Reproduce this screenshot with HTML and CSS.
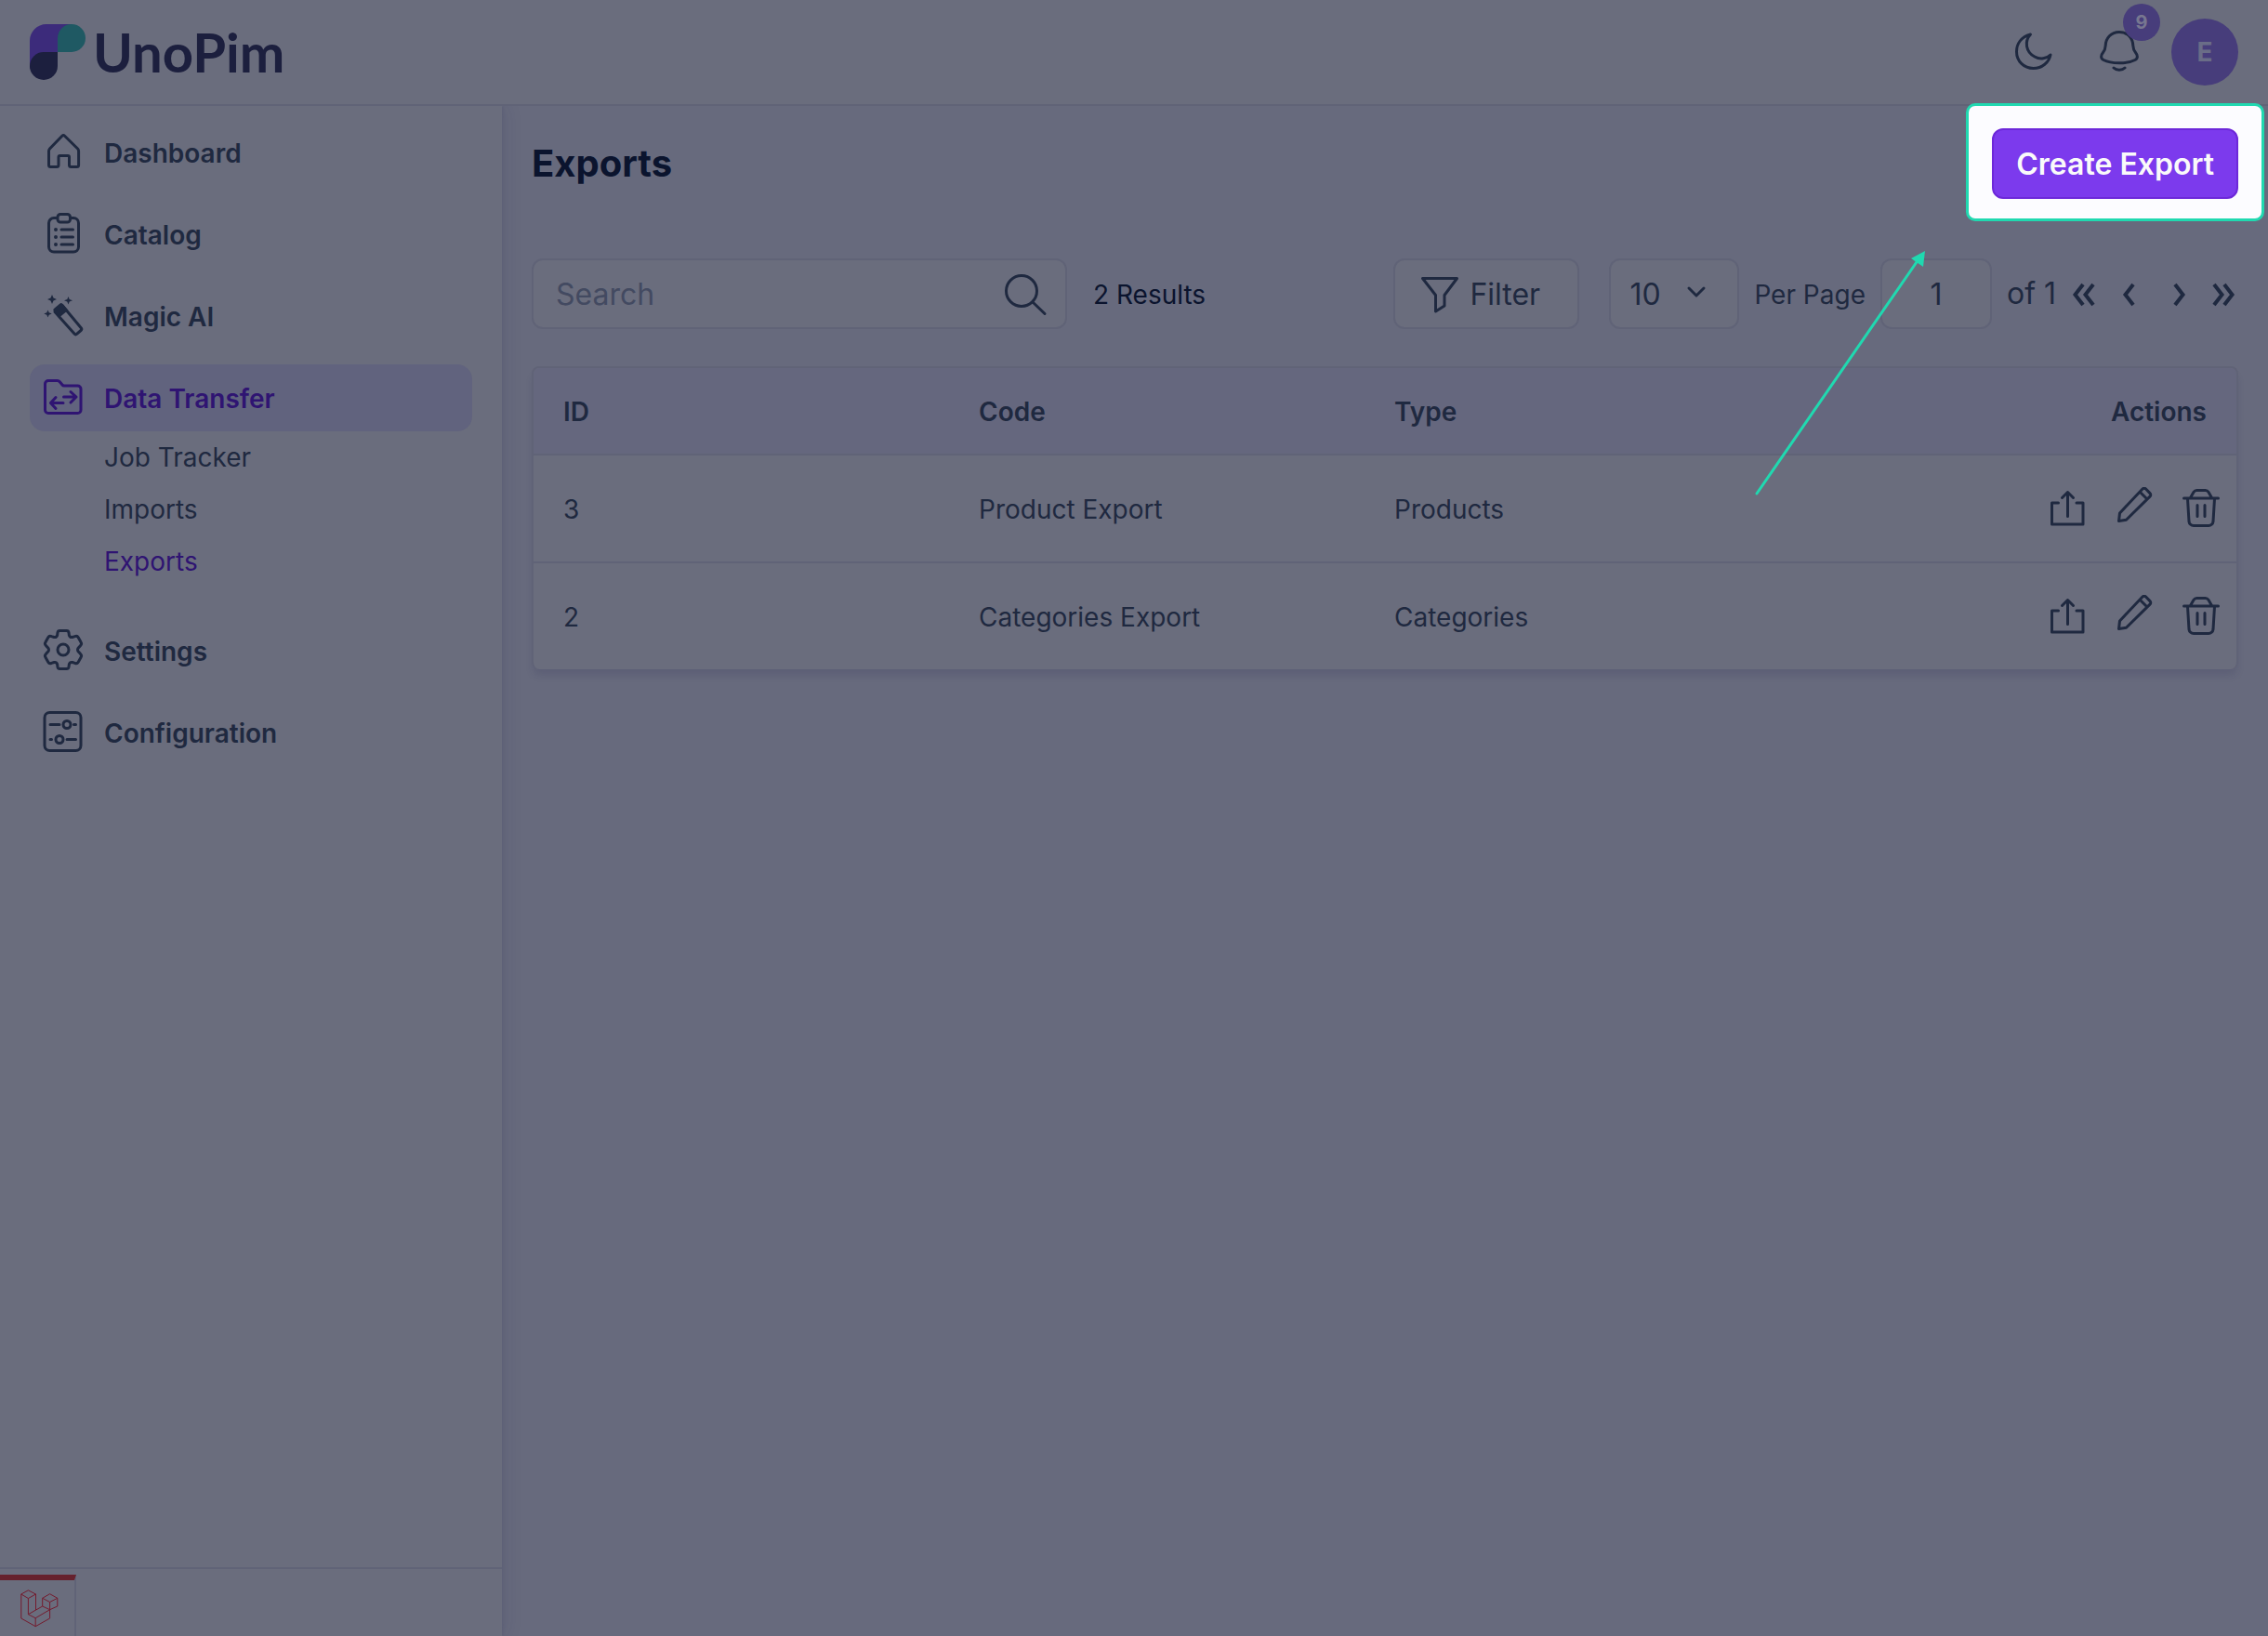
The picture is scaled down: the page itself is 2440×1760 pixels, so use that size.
FILE: index.html
```html
<!DOCTYPE html>
<html lang="en">
<head>
  <meta charset="UTF-8">
  <meta name="viewport" content="width=device-width, initial-scale=1.0">
  <title>Exports</title>
  <link rel="stylesheet" href="styles.css">
</head>
<body>
  <!-- Shared icons -->
  <svg class="sprite" aria-hidden="true">
    <symbol id="icon-export" viewBox="0 0 48 48">
      <path d="M14.500 17H7.500V40H41V17H34M24.500 31.500V5.500M18.500 11.500l6-6 6 6"/>
    </symbol>
    <symbol id="icon-edit" viewBox="0 0 48 48">
      <path d="M7.500 36.500L8.500 28 33 2a2.500 2.500 0 0 1 3.600 0l4.400 4.600a2.500 2.500 0 0 1 0 3.600L15.500 35.200ZM30.500 5.500l7.500 7.500"/>
    </symbol>
    <symbol id="icon-delete" viewBox="0 0 48 48">
      <path d="M5.500 12H42.500M12.500 11.500l3.600-6.200a4 4 0 0 1 3.300-1.800h9.200a4 4 0 0 1 3.300 1.800L35.500 11.500M9.500 12.500l1.500 24.500a5 5 0 0 0 5 4.500h16a5 5 0 0 0 5-4.500L38.500 12.500M20 19.500V31.500M28 19.500V31.500"/>
    </symbol>
  </svg>

  <header class="header">
    <a href="#" class="logo" aria-label="UnoPim">
      <svg class="logo-mark" viewBox="0 0 60 60">
        <path fill="#3c2b7b" d="M0 48V18C0 8 8 0 18 0H45V30H20Z"/>
        <path fill="#1f5963" d="M30 30V15a15 15 0 0 1 30 0a15 15 0 0 1-15 15Z"/>
        <path fill="#1c1f3e" d="M30 30V45a15 15 0 0 1-30 0a15 15 0 0 1 15-15Z"/>
      </svg>
      <span class="logo-text">UnoPim</span>
    </a>
    <div class="header-right">
      <div class="header-icons">
        <button type="button" class="icon-button" aria-label="Dark mode">
          <svg class="icon" viewBox="0 0 48 48"><path d="M20.500 5C10 8 5.500 15.500 5.500 23.500C5.500 34 13.500 41.500 23.500 41.500C33 41.500 40.500 35 42 27C38 31 31 32.500 25 29C15.500 24 13.500 12.500 20.500 5Z"/></svg>
        </button>
        <button type="button" class="icon-button bell" aria-label="Notifications">
          <svg class="icon" viewBox="0 0 48 48"><path d="M24 2.500C15 2.500 9.500 9 9.200 17C9 21 8.500 22 6.500 24.500C4 27.500 3.800 31 7 32.500C11 34.600 17 35.800 24 35.800S37 34.600 41 32.500C44.200 31 44 27.500 41.500 24.500C39.500 22 39 21 38.800 17C38.500 9 33 2.500 24 2.500ZM18 41C21 44 27 44 30 41"/></svg>
          <span class="badge">9</span>
        </button>
      </div>
      <button type="button" class="avatar">E</button>
    </div>
  </header>

  <div class="layout">
    <aside class="sidebar">
      <nav class="menu">
        <a href="#" class="menu-item">
          <svg class="icon" viewBox="0 0 48 48"><path d="M22.800 5.200a2 2 0 0 1 2.800 0L39.600 19a4 4 0 0 1 1 2.600V36.500a2 2 0 0 1-2 2H32.500a2 2 0 0 1-2-2V28a1.500 1.500 0 0 0-1.500-1.500H20.500a1.500 1.500 0 0 0-1.500 1.500V36.500a2 2 0 0 1-2 2H10.500a2 2 0 0 1-2-2V21.600a4 4 0 0 1 1-2.600Z"/></svg>
          Dashboard
        </a>
        <a href="#" class="menu-item">
          <svg class="icon" viewBox="0 0 48 48"><path d="M18 5.500H14a5.500 5.500 0 0 0-5.500 5.500V36.500a5.500 5.500 0 0 0 5.500 5.500H35a5.500 5.500 0 0 0 5.500-5.500V11a5.500 5.500 0 0 0-5.500-5.500H31.500M21 1.500h7.500a3 3 0 0 1 3 3v2.500a3 3 0 0 1-3 3H21a3 3 0 0 1-3-3V4.500a3 3 0 0 1 3-3ZM22 18H34.500M22 26H34.500M22 34H34.500"/><path class="dots" d="M16 18h0M16 26h0M16 34h0"/></svg>
          Catalog
        </a>
        <a href="#" class="menu-item">
          <svg class="icon" viewBox="0 0 48 48"><path d="M15 18.500L36 42a2 2 0 0 0 2.800.2l4.200-3.700a2 2 0 0 0 .2-2.800L23 11.500"/><path class="solid" d="M14 15l6.500-5.500a2 2 0 0 1 2.800.3l6 7-8.500 7-7-6a2 2 0 0 1 .2-2.800ZM12 0l1.500 3.500L17 5l-3.500 1.500L12 10l-1.500-3.500L7 5l3.500-1.500ZM29.500 2l1.200 3L34 6.200l-3.300 1.200-1.200 3-1.200-3L25 6.200 28.300 5ZM7.500 16.500l1.200 2.800 3 1.200-3 1.200-1.200 2.800-1.200-2.800-3-1.200 3-1.200Z"/></svg>
          Magic AI
        </a>
        <div class="menu-group">
          <a href="#" class="menu-item active">
            <svg class="icon" viewBox="0 0 48 48"><path d="M8 4.500H17.500a4 4 0 0 1 3 1.500L23 9a2.500 2.500 0 0 0 2 1H39.500a3.500 3.500 0 0 1 3.500 3.500V36a3.500 3.500 0 0 1-3.500 3.500H8a3.500 3.500 0 0 1-3.500-3.500V8a3.500 3.500 0 0 1 3.500-3.500ZM24.500 22H38M32 16.500l6 5.500-6 6M24 28.500H10.500M16 22.500l-5.500 6 5.500 6"/></svg>
            Data Transfer
          </a>
          <div class="submenu">
            <a href="#">Job Tracker</a>
            <a href="#">Imports</a>
            <a href="#" class="current">Exports</a>
          </div>
        </div>
        <a href="#" class="menu-item">
          <svg class="icon" viewBox="0 1 48 48"><path d="M20.500 2.500H27.500A2.500 2.500 0 0 1 30 4.500L30.400 7.500A3 3 0 0 0 33.800 9.500L36.600 8.600A2.800 2.800 0 0 1 40.200 9.800L43 14.800A2.800 2.800 0 0 1 42.600 18.400L40.600 20.700A3 3 0 0 0 40.600 25.300L42.600 27.600A2.800 2.800 0 0 1 43 31.200L40.200 36.200A2.800 2.800 0 0 1 36.600 37.400L33.800 36.500A3 3 0 0 0 30.400 38.500L30 41.500A2.500 2.500 0 0 1 27.500 43.500H20.500A2.500 2.500 0 0 1 18 41.500L17.600 38.500A3 3 0 0 0 14.200 36.500L11.400 37.400A2.800 2.800 0 0 1 7.800 36.200L5 31.200A2.800 2.800 0 0 1 5.400 27.600L7.400 25.300A3 3 0 0 0 7.400 20.700L5.400 18.400A2.800 2.800 0 0 1 5 14.800L7.800 9.800A2.800 2.800 0 0 1 11.400 8.600L14.200 9.500A3 3 0 0 0 17.600 7.500L18 4.500A2.500 2.500 0 0 1 20.500 2.500Z"/><circle cx="24" cy="23" r="6"/></svg>
          Settings
        </a>
        <a href="#" class="menu-item">
          <svg class="icon" viewBox="0 1 48 48"><rect x="4" y="2.500" width="39" height="41" rx="5.500"/><path d="M10 15.500H20M35.500 15.500H37.500M10 31.500H11.500M28 31.500H37.500"/><circle cx="28" cy="15.500" r="4"/><circle cx="20" cy="31.500" r="4"/></svg>
          Configuration
        </a>
      </nav>
      <div class="sidebar-footer"></div>
    </aside>

    <main class="content">
      <div class="page-head">
        <h1>Exports</h1>
        <div class="tour-target">
          <span class="spotlight"></span>
          <button type="button" class="primary-button">Create Export</button>
          <svg class="tour-arrow" viewBox="0 0 190 270">
            <path class="line" d="M4 265L178 13"/>
            <path class="head" d="M185 4L170 12L183 21Z"/>
          </svg>
        </div>
      </div>

      <div class="toolbar">
        <div class="search">
          <input type="text" placeholder="Search" aria-label="Search">
          <svg class="icon" viewBox="0 0 48 48"><circle cx="19" cy="21" r="16.500"/><path d="M31 33L44 45.500"/></svg>
        </div>
        <p class="results">2 Results</p>

        <button type="button" class="filter">
          <svg class="icon" viewBox="0 0 48 48"><path d="M5.500 7.500H42.500L29 25.500V37L19.500 43V25.500Z"/></svg>
          Filter
        </button>
        <div class="select">
          <select id="per-page">
            <option>10</option>
            <option>20</option>
            <option>50</option>
          </select>
          <svg class="icon" viewBox="0 0 24 24"><path d="M4 8l8 8 8-8"/></svg>
        </div>
        <label for="per-page" class="per-page">Per Page</label>
        <input type="text" class="page-input" value="1" aria-label="Page">
        <span class="total">of 1</span>
        <div class="pager">
          <button type="button" aria-label="First page"><svg class="icon" viewBox="0 0 32 32"><path d="M15 6L6.500 17L15 28M26 6L17.500 17L26 28"/></svg></button>
          <button type="button" aria-label="Previous page"><svg class="icon" viewBox="0 0 32 32"><path d="M21 6L12.500 17L21 28"/></svg></button>
          <button type="button" aria-label="Next page" class="next"><svg class="icon" viewBox="0 0 32 32"><path d="M12 6L20.500 17L12 28"/></svg></button>
          <button type="button" aria-label="Last page"><svg class="icon" viewBox="0 0 32 32"><path d="M6 6L14.500 17L6 28M17 6L25.500 17L17 28"/></svg></button>
        </div>
      </div>

      <table class="grid">
        <thead>
          <tr>
            <th>ID</th>
            <th>Code</th>
            <th>Type</th>
            <th class="right">Actions</th>
          </tr>
        </thead>
        <tbody>
          <tr>
            <td>3</td>
            <td>Product Export</td>
            <td>Products</td>
            <td class="actions">
              <button type="button" class="icon-button" aria-label="Export"><svg class="icon"><use href="#icon-export"/></svg></button>
              <button type="button" class="icon-button" aria-label="Edit"><svg class="icon"><use href="#icon-edit"/></svg></button>
              <button type="button" class="icon-button" aria-label="Delete"><svg class="icon"><use href="#icon-delete"/></svg></button>
            </td>
          </tr>
          <tr>
            <td>2</td>
            <td>Categories Export</td>
            <td>Categories</td>
            <td class="actions">
              <button type="button" class="icon-button" aria-label="Export"><svg class="icon"><use href="#icon-export"/></svg></button>
              <button type="button" class="icon-button" aria-label="Edit"><svg class="icon"><use href="#icon-edit"/></svg></button>
              <button type="button" class="icon-button" aria-label="Delete"><svg class="icon"><use href="#icon-delete"/></svg></button>
            </td>
          </tr>
        </tbody>
      </table>
    </main>
  </div>

  <!-- Laravel debug bar, collapsed -->
  <a href="#" class="debugbar" aria-label="Debug bar">
    <svg viewBox="0 0 41 41"><path d="M.8 5L8.400.8L16.500 5V22M.8 5V31L16.200 39.700L31.600 31V21.700M.8 5L8.400 9.500L16.500 5M8.400 9.500V26.700L16.200 30.700V39.700M8.400 26.700L23.700 18V9.300L31.600 4.700L39.800 9.300V18L31.600 21.700L23.700 18M23.700 9.300L31.600 13.500L39.800 9.300M31.600 13.500V21.700L16.200 30.700"/></svg>
  </a>
</body>
</html>
```
FILE: styles.css
```css
/* Colours are the app's palette as seen under the tour backdrop */
:root {
  --surface: #6a6d7d;
  --page: #676a7d;
  --border: #606377;
  --head-row: #65677e;
  --active: #61637e;
  --text: #1f2940;
  --text-dark: #0b142e;
  --muted: #434a61;
  --violet: #2f1472;
  --violet-soft: #473d7b;
  --tour: #20d9b0;
}

* {
  margin: 0;
  padding: 0;
  box-sizing: border-box;
  font-family: Inter, sans-serif;
}

body {
  display: flex;
  flex-direction: column;
  min-height: 100vh;
  background-color: var(--page);
  color: var(--text);
  font-size: 28px;
  line-height: 40px;
}

a {
  color: inherit;
  text-decoration: none;
}

button {
  border: none;
  background: none;
  color: inherit;
  cursor: pointer;
}

.sprite {
  position: absolute;
  width: 0;
  height: 0;
}

.icon {
  display: block;
  flex: none;
  width: 48px;
  height: 48px;
  fill: none;
  stroke: currentColor;
  stroke-width: 3;
  stroke-linecap: round;
  stroke-linejoin: round;
}

.icon .dots {
  stroke-width: 4;
}

.icon .solid {
  fill: currentColor;
  stroke: none;
}

.icon-button {
  width: 48px;
  height: 48px;
}

/* Header */
.header {
  display: flex;
  justify-content: space-between;
  align-items: center;
  height: 114px;
  padding: 0 32px;
  background-color: var(--surface);
  border-bottom: 2px solid var(--border);
}

.logo {
  display: flex;
  align-items: center;
  gap: 8px;
}

.logo-mark {
  width: 60px;
  height: 60px;
}

.logo-text {
  font-family: Lato, sans-serif;
  font-size: 58px;
  font-weight: 700;
  line-height: 60px;
  color: #1c1f3e;
}

.header-right {
  display: flex;
  align-items: center;
  gap: 32px;
}

.header-icons {
  display: flex;
  gap: 44px;
}

.bell {
  position: relative;
}

.badge {
  position: absolute;
  top: -28px;
  right: -20px;
  width: 40px;
  height: 40px;
  border-radius: 50%;
  background-color: var(--violet-soft);
  color: #777790;
  font-size: 20px;
  font-weight: 700;
  line-height: 40px;
}

.avatar {
  width: 72px;
  height: 72px;
  border-radius: 50%;
  background-color: var(--violet-soft);
  color: #6a6d87;
  font-size: 28px;
  font-weight: 700;
}

/* Sidebar */
.layout {
  display: flex;
  flex: 1;
}

.sidebar {
  display: flex;
  flex-direction: column;
  flex: none;
  width: 540px;
  background-color: var(--surface);
  box-shadow: 2px 0 2px rgba(40, 40, 80, 0.06), 6px 0 16px rgba(40, 40, 80, 0.08);
  clip-path: inset(0 -40px 0 0);
}

.menu {
  display: flex;
  flex: 1;
  flex-direction: column;
  gap: 16px;
  padding: 14px 32px;
}

.menu-item {
  display: flex;
  align-items: center;
  gap: 20px;
  height: 72px;
  padding: 2px 12px 0;
  border-radius: 16px;
  font-weight: 600;
}

.menu-item.active {
  background-color: var(--active);
  color: var(--violet);
}

.submenu {
  display: flex;
  flex-direction: column;
  padding: 0 0 16px 80px;
  line-height: 56px;
}

.submenu .current {
  color: var(--violet);
}

.sidebar-footer {
  height: 74px;
  border-top: 2px solid var(--border);
}

/* Content */
.content {
  flex: 1;
  min-width: 0;
  padding: 24px 32px;
}

.page-head {
  display: flex;
  justify-content: space-between;
  align-items: center;
  margin-bottom: 64px;
}

h1 {
  color: var(--text-dark);
  font-size: 40px;
  font-weight: 700;
  line-height: 48px;
}

.primary-button {
  position: relative;
  display: block;
  height: 76px;
  padding: 0 24px;
  border: 2px solid #6d28d9;
  border-radius: 12px;
  background-color: #7c3aed;
  color: #fafafa;
  font-size: 32px;
  font-weight: 600;
}

/* Tour highlight and its pointer */
.tour-target {
  position: relative;
}

.spotlight {
  position: absolute;
  inset: -27px -28px -24px -28px;
  border: 3px solid var(--tour);
  border-radius: 10px;
  background-color: #fcfcff;
}

.tour-arrow {
  position: absolute;
  top: 128px;
  right: 332px;
  width: 190px;
  height: 270px;
}

.tour-arrow .line {
  fill: none;
  stroke: var(--tour);
  stroke-width: 3;
  stroke-linecap: round;
}

.tour-arrow .head {
  fill: var(--tour);
}

/* Toolbar */
.toolbar {
  display: flex;
  align-items: center;
  gap: 16px;
  margin-bottom: 40px;
}

.search {
  position: relative;
  width: 576px;
}

.search input,
.filter,
.select select,
.page-input {
  height: 76px;
  border: 2px solid var(--border);
  border-radius: 12px;
  background-color: var(--surface);
  color: var(--text);
  font-size: 32px;
}

.search input {
  display: block;
  width: 100%;
  padding: 0 72px 0 24px;
}

.search input::placeholder {
  color: var(--muted);
  opacity: 1;
}

.search .icon {
  position: absolute;
  top: 14px;
  right: 20px;
}

.results {
  margin-left: 12px;
  padding-top: 2px;
  color: var(--text-dark);
}

.filter {
  display: flex;
  align-items: center;
  gap: 8px;
  width: 200px;
  margin-left: auto;
  margin-right: 16px;
  padding: 0 24px;
}

.select {
  position: relative;
}

.select select {
  display: block;
  width: 140px;
  padding: 0 20px;
  appearance: none;
}

.select .icon {
  position: absolute;
  top: 24px;
  right: 34px;
  width: 24px;
  height: 24px;
  pointer-events: none;
}

.per-page {
  padding-top: 2px;
}

.page-input {
  width: 120px;
  text-align: center;
}

.total {
  font-size: 32px;
}

.pager {
  display: flex;
  gap: 16px;
  margin-left: -2px;
}

.pager .next {
  margin-left: 6px;
}

.pager .icon {
  width: 32px;
  height: 32px;
  stroke-width: 4;
  stroke-linecap: butt;
  stroke-linejoin: miter;
}

/* Data grid */
.grid {
  display: block;
  border: 2px solid var(--border);
  border-bottom: none;
  border-radius: 8px;
  background-color: var(--surface);
  box-shadow: 0 8px 8px -2px rgba(40, 40, 80, 0.16);
}

.grid thead,
.grid tbody {
  display: block;
}

.grid tr {
  display: grid;
  grid-template-columns: repeat(4, minmax(0, 1fr));
  align-items: center;
  gap: 20px;
  height: 116px;
  padding: 2px 32px 0;
  border-bottom: 2px solid var(--border);
}

.grid thead tr {
  height: 94px;
  border-radius: 6px 6px 0 0;
  background-color: var(--head-row);
}

.grid tbody tr:last-child {
  height: 114px;
  border-bottom: none;
}

.grid th {
  font-weight: 600;
  text-align: left;
}

.grid .right {
  text-align: right;
}

.actions {
  display: flex;
  justify-content: flex-end;
  gap: 24px;
  margin-right: -18px;
}

/* Debug bar */
.debugbar {
  position: fixed;
  left: 0;
  bottom: 0;
  width: 82px;
  height: 66px;
  padding: 10px 22px;
  border-top: 6px solid #66212d;
  border-right: 2px solid var(--border);
  background-color: var(--surface);
}

.debugbar svg {
  display: block;
  width: 41px;
  height: 41px;
  fill: none;
  stroke: #741b2e;
  stroke-width: 1;
  stroke-linejoin: round;
}
```
